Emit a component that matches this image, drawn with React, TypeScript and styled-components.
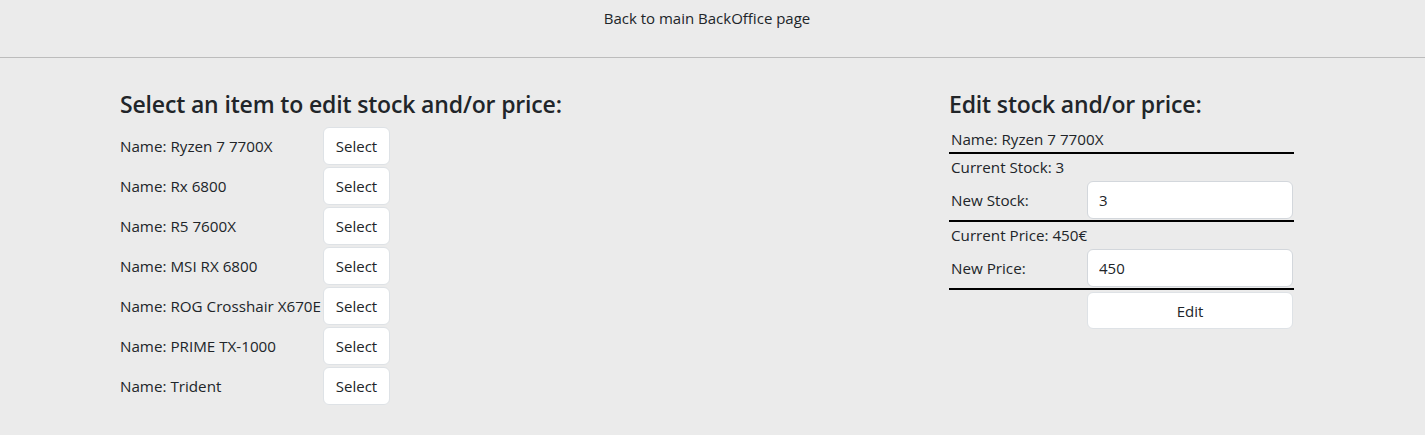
import React from "react";
import styled, { createGlobalStyle } from "styled-components";

const Global = createGlobalStyle`
  html, body { margin: 0; padding: 0; }
  body {
    background: #ebebeb;
    color: #212529;
    font-family: "Open Sans", "Noto Sans", sans-serif;
    font-size: 16px;
    line-height: 1.5;
  }
  * { box-sizing: border-box; }
`;

const Header = styled.header`
  height: 58px;
  border-bottom: 1px solid #bcbcbc;
  display: flex;
  justify-content: center;
  padding: 6px 11px 0 0;
`;

const BackLink = styled.a`
  color: #212529;
  text-decoration: none;
  font-size: 15px;
  line-height: 24px;
  height: 24px;
`;

const Main = styled.main`
  display: grid;
  grid-template-columns: 829px 345px;
  padding: 32px 0 0 120px;
`;

const Heading = styled.h2`
  margin: 0 0 8px;
  font-size: 23px;
  font-weight: 600;
  letter-spacing: -0.16px;
  line-height: 29px;
  white-space: nowrap;
`;

const Column = styled.section`
  display: flex;
  flex-direction: column;
`;

const ItemList = styled.div`
  display: flex;
  flex-direction: column;
  gap: 2px;
`;

const ItemRow = styled.div`
  display: flex;
  align-items: center;
  height: 38px;
`;

const ItemName = styled.span`
  width: 203px;
  white-space: nowrap;
  font-size: 15.2px;
`;

const Button = styled.button<{ $wide?: boolean }>`
  font-family: inherit;
  font-size: 15px;
  color: #212529;
  background: #fff;
  border: 1px solid #dee2e6;
  border-radius: 6px;
  height: ${(p) => (p.$wide ? "37px" : "38px")};
  width: ${(p) => (p.$wide ? "206px" : "67px")};
  padding: 0;
  cursor: pointer;
`;

const EditBox = styled.div`
  display: flex;
  flex-direction: column;
`;

const Divided = styled.div`
  border-bottom: 2px solid #000;
  padding: 0 1px 0 2px;
`;

const TextLine = styled.div<{ $tall?: boolean }>`
  font-size: 15.2px;
  line-height: 24px;
  height: ${(p) => (p.$tall ? "26px" : "25px")};
  padding-top: ${(p) => (p.$tall ? "1px" : "0")};
  white-space: nowrap;
`;

const FieldRow = styled.div`
  display: grid;
  grid-template-columns: 136px 206px;
  align-items: center;
  padding: 1px 0 1px 0;
`;

const FieldLabel = styled.label`
  font-size: 15.2px;
`;

const Input = styled.input`
  font-family: inherit;
  font-size: 15px;
  color: #212529;
  background: #fff;
  border: 1px solid #d3d7dc;
  border-radius: 6px;
  height: 38px;
  padding: 0 11px;
  outline: none;
`;

const ActionRow = styled.div`
  display: grid;
  grid-template-columns: 136px 206px;
  padding: 2px 0 0 2px;
`;

const items = [
  "Ryzen 7 7700X",
  "Rx 6800",
  "R5 7600X",
  "MSI RX 6800",
  "ROG Crosshair X670E",
  "PRIME TX-1000",
  "Trident",
];

export default function App() {
  return (
    <>
      <Global />
      <Header>
        <BackLink href="#">Back to main BackOffice page</BackLink>
      </Header>
      <Main>
        <Column>
          <Heading>Select an item to edit stock and/or price:</Heading>
          <ItemList>
            {items.map((name) => (
              <ItemRow key={name}>
                <ItemName>Name: {name}</ItemName>
                <Button>Select</Button>
              </ItemRow>
            ))}
          </ItemList>
        </Column>
        <Column>
          <Heading>Edit stock and/or price:</Heading>
          <EditBox>
            <Divided>
              <TextLine>Name: Ryzen 7 7700X</TextLine>
            </Divided>
            <Divided>
              <TextLine $tall>Current Stock: 3</TextLine>
              <FieldRow>
                <FieldLabel>New Stock:</FieldLabel>
                <Input defaultValue="3" />
              </FieldRow>
            </Divided>
            <Divided>
              <TextLine $tall>Current Price: 450€</TextLine>
              <FieldRow>
                <FieldLabel>New Price:</FieldLabel>
                <Input defaultValue="450" />
              </FieldRow>
            </Divided>
            <ActionRow>
              <span />
              <Button $wide>Edit</Button>
            </ActionRow>
          </EditBox>
        </Column>
      </Main>
    </>
  );
}
